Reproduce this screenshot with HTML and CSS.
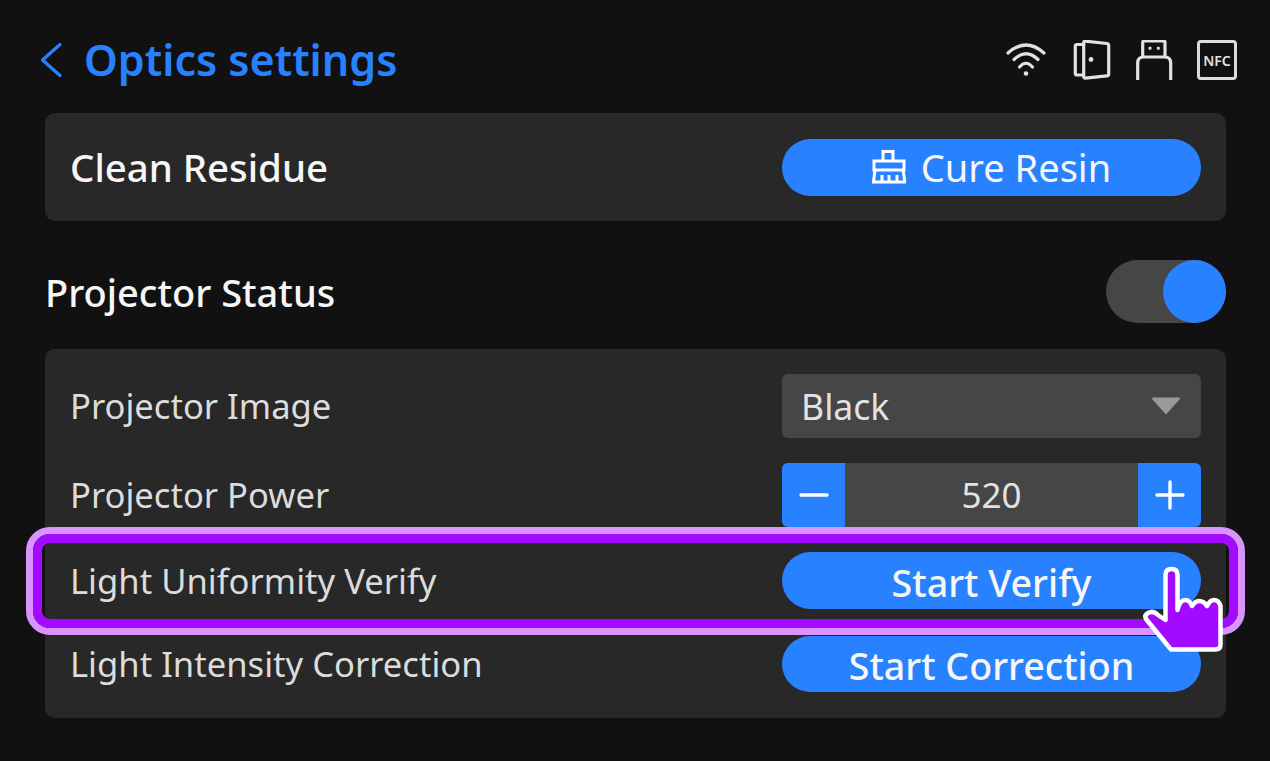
FILE: index.html
```html
<!DOCTYPE html>
<html lang="en">
<head>
    <meta charset="UTF-8">
    <meta name="viewport" content="width=device-width, initial-scale=1.0">
    <title>Optics settings</title>
    <link rel="stylesheet" href="styles.css">
</head>
<body>
    <div class="page">
        <div class="header">
            <div class="header-title">
                <svg class="back-icon" width="24" height="36" viewBox="0 0 24 36">
                    <path d="M20 2.5 L2.5 18 L20 33.5"/>
                </svg>
                <h1>Optics settings</h1>
            </div>
            <div class="status-icons">
                <svg class="status-icon wifi" width="40" height="40" viewBox="0 0 40 40">
                    <path d="M2 13 Q20 -3 38 13"/>
                    <path d="M8 19.5 Q20 8 32 19.5"/>
                    <path d="M13.5 27 Q20 19.5 26.5 27"/>
                    <circle class="dot" cx="20" cy="33.5" r="2.3"/>
                </svg>
                <svg class="status-icon" width="40" height="40" viewBox="0 0 40 40">
                    <path d="M12.7 4.5 H6 Q4.3 4.5 4.3 6 V33.5 Q4.3 35 6 35 H12.7"/>
                    <path d="M12.7 2.6 Q12.7 1 14.5 1.2 L35.8 3.5 Q37.7 3.7 37.7 5.5 V33.9 Q37.7 35.7 35.8 35.9 L14.5 38.2 Q12.7 38.4 12.7 36.6 Z"/>
                    <circle class="dot" cx="20" cy="19.5" r="2.4"/>
                </svg>
                <svg class="status-icon" width="40" height="40" viewBox="0 0 40 40">
                    <path d="M8.7 16.7 V2.5 Q8.7 1 10.2 1 H29.5 Q31 1 31 2.5 V16.7"/>
                    <path d="M3.7 39 V23 Q3.7 17 9.7 17 H30.7 Q36.7 17 36.7 23 V39"/>
                    <rect class="dot" x="14.5" y="6.8" width="3" height="3" rx="1"/>
                    <rect class="dot" x="22.8" y="6.8" width="3" height="3" rx="1"/>
                </svg>
                <div class="nfc-icon">NFC</div>
            </div>
        </div>

        <div class="card card-clean">
            <span class="strong-label clean-label">Clean Residue</span>
            <button class="btn">
                <svg class="broom-icon" width="34" height="34" viewBox="0 0 34 34">
                    <path d="M11 11 V1.5 H21 V11"/>
                    <path d="M2 11 H32 V20 H2 Z"/>
                    <path d="M3 20 L1.5 32 H33 L31 20"/>
                    <path d="M10 25 V32 M17 25 V32 M25 25 V32"/>
                </svg>
                Cure Resin
            </button>
        </div>

        <div class="section-head">
            <span class="strong-label">Projector Status</span>
            <div class="toggle"><div class="toggle-knob"></div></div>
        </div>

        <div class="card card-list">
            <div class="row">
                <span class="row-label">Projector Image</span>
                <div class="select">
                    <span>Black</span>
                    <svg width="30" height="18" viewBox="0 0 30 18">
                        <path class="caret" d="M2 1.5 H28 L15 16 Z"/>
                    </svg>
                </div>
            </div>
            <div class="row">
                <span class="row-label">Projector Power</span>
                <div class="stepper">
                    <div class="step-btn">
                        <svg width="30" height="30" viewBox="0 0 30 30"><path d="M2 15 H28"/></svg>
                    </div>
                    <div class="step-value">520</div>
                    <div class="step-btn">
                        <svg width="30" height="30" viewBox="0 0 30 30"><path d="M2 15 H28 M15 2 V28"/></svg>
                    </div>
                </div>
            </div>
            <div class="row row-verify">
                <span class="row-label">Light Uniformity Verify</span>
                <button class="btn btn-strong">Start Verify</button>
            </div>
            <div class="row">
                <span class="row-label">Light Intensity Correction</span>
                <button class="btn btn-strong btn-short">Start Correction</button>
            </div>
        </div>
    </div>

    <!-- callout drawn on top of the screen -->
    <div class="highlight"></div>
    <svg class="hand" width="180" height="140" viewBox="0 0 180 140">
        <path d="M85.500 100 V55 Q85.500 49 91.500 49 Q97.500 49 97.500 55 V90 Q100 80 105 80 Q110 80 112 86 Q115 81 119 81 Q124 81 127 86 Q130 80 134 80 Q139 80 140.500 86 V124.500 Q140.500 129.500 135.500 129.500 H91 L66 99 Q64 95 68 93 Q73 90 78 95 Z"/>
    </svg>
</body>
</html>
```

FILE: styles.css
```css
* {
    box-sizing: border-box;
}

body {
    margin: 0;
    height: 761px;
    overflow: hidden;
    background-color: #111111;
    font-family: "Noto Sans", Arial, sans-serif;
    color: #e2e2e2;
}

.page {
    display: flex;
    flex-direction: column;
    padding: 0 44px 0 45px;
}

.header {
    display: flex;
    justify-content: space-between;
    align-items: center;
    height: 113px;
    padding-top: 7px;
    margin: 0 -11px 0 -5px;
}

.header-title {
    display: flex;
    align-items: center;
    gap: 20px;
}

.back-icon path {
    fill: none;
    stroke: #2882ff;
    stroke-width: 3.2;
    stroke-linecap: round;
    stroke-linejoin: round;
}

h1 {
    margin: 0;
    font-size: 43px;
    line-height: 50px;
    font-weight: 600;
    color: #2882ff;
}

.status-icons {
    display: flex;
    align-items: center;
    gap: 23px;
}

.status-icon path {
    fill: none;
    stroke: #e2e2e2;
    stroke-width: 3.2;
    stroke-linecap: round;
    stroke-linejoin: round;
}

.status-icon .dot {
    fill: #e2e2e2;
}

.wifi {
    margin-right: 2px;
}

.nfc-icon {
    display: flex;
    align-items: center;
    justify-content: center;
    width: 40px;
    height: 40px;
    border: 3px solid #dcdcdc;
    border-radius: 4px;
    font-size: 14px;
    font-weight: 600;
    color: #e2e2e2;
}

.card {
    background-color: #282828;
    border-radius: 10px;
}

.card-clean {
    display: flex;
    justify-content: space-between;
    align-items: center;
    height: 108px;
    padding: 0 25px;
}

.strong-label {
    font-size: 38px;
    font-weight: 500;
    color: #f6f6f6;
}

.clean-label {
    font-size: 38.4px;
}

.btn {
    display: flex;
    align-items: center;
    justify-content: center;
    gap: 15px;
    width: 419px;
    height: 57px;
    padding: 0;
    border: none;
    border-radius: 29px;
    background-color: #2882ff;
    font-family: inherit;
    font-size: 38px;
    color: #f6f6f6;
}

.btn-strong {
    font-size: 37.6px;
    font-weight: 500;
    padding-top: 3px;
}

.btn-short {
    height: 56px;
}

.broom-icon path {
    fill: none;
    stroke: #ffffff;
    stroke-width: 3;
}

.section-head {
    display: flex;
    justify-content: space-between;
    align-items: center;
    height: 63px;
    margin-top: 39px;
    margin-bottom: 26px;
}

.toggle {
    display: flex;
    justify-content: flex-end;
    width: 120px;
    height: 63px;
    border-radius: 32px;
    background-color: #464646;
}

.toggle-knob {
    width: 63px;
    height: 63px;
    border-radius: 50%;
    background-color: #2882ff;
}

.card-list {
    display: flex;
    flex-direction: column;
    gap: 25px;
    padding: 25px 25px 26px;
}

.row {
    display: flex;
    justify-content: space-between;
    align-items: center;
}

.row-label {
    font-size: 34.6px;
    padding-bottom: 2px;
    color: #dcdcdc;
}

.row-verify {
    margin-bottom: 2px;
}

.row-verify .row-label {
    padding-bottom: 0;
}

.select {
    display: flex;
    justify-content: space-between;
    align-items: center;
    width: 419px;
    height: 64px;
    padding: 0 20px 0 19px;
    border-radius: 6px;
    background-color: #464646;
    font-size: 35.6px;
    color: #e2e2e2;
}

.caret {
    fill: #999999;
    stroke: #999999;
    stroke-width: 2;
    stroke-linejoin: round;
}

.stepper {
    display: flex;
    width: 419px;
    height: 64px;
    border-radius: 6px;
    overflow: hidden;
    background-color: #464646;
}

.step-btn {
    display: flex;
    align-items: center;
    justify-content: center;
    width: 63px;
    background-color: #2882ff;
}

.step-btn path {
    fill: none;
    stroke: #ffffff;
    stroke-width: 3.4;
    stroke-linecap: round;
}

.step-value {
    flex: 1;
    text-align: center;
    font-size: 35px;
    line-height: 64px;
    color: #e2e2e2;
}

.highlight {
    position: absolute;
    left: 26px;
    top: 527px;
    width: 1219px;
    height: 108px;
    border: 7px solid #da92fe;
    border-radius: 24px;
}

.highlight::after {
    content: "";
    position: absolute;
    inset: 0;
    border: 9px solid #a20bff;
    border-radius: 17px;
}

.hand {
    position: absolute;
    left: 1080px;
    top: 520px;
}

.hand path {
    fill: #a20bff;
    stroke: #ffffff;
    stroke-width: 4.5;
    stroke-linejoin: round;
}
```
